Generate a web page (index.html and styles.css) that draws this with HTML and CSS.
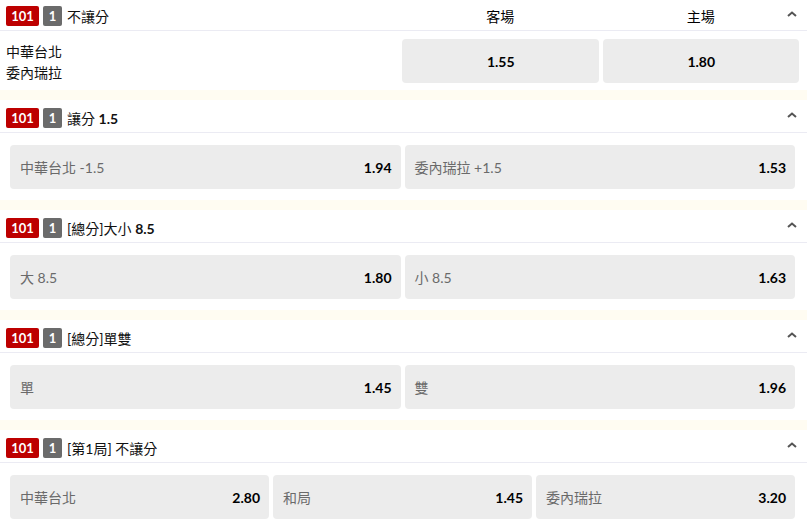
FILE: index.html
```html
<!DOCTYPE html>
<html>
<head>
  <meta charset="utf-8">
  <title>Markets</title>
  <link rel="stylesheet" href="styles.css">
</head>
<body>
  <div class="markets">

    <section class="market">
      <div class="market-head head-cols">
        <div class="head-title">
          <span class="badge badge-red">101</span>
          <span class="badge badge-grey">1</span>
          <span class="title">不讓分</span>
        </div>
        <div class="col-label">客場</div>
        <div class="col-label">主場</div>
        <svg class="chevron" width="10" height="6" viewBox="0 0 10 6"><polyline points="1,5 5,1.5 9,5" fill="none" stroke="#555" stroke-width="2"/></svg>
      </div>
      <div class="market-body body-cols">
        <div class="teams">
          <div>中華台北</div>
          <div>委內瑞拉</div>
        </div>
        <div class="odd odd-center"><b>1.55</b></div>
        <div class="odd odd-center"><b>1.80</b></div>
      </div>
    </section>

    <div class="strip"></div>

    <section class="market">
      <div class="market-head">
        <div class="head-title">
          <span class="badge badge-red">101</span>
          <span class="badge badge-grey">1</span>
          <span class="title">讓分 <b>1.5</b></span>
        </div>
        <svg class="chevron" width="10" height="6" viewBox="0 0 10 6"><polyline points="1,5 5,1.5 9,5" fill="none" stroke="#555" stroke-width="2"/></svg>
      </div>
      <div class="market-body grid-2">
        <div class="odd"><span class="label">中華台北 -1.5</span><b>1.94</b></div>
        <div class="odd"><span class="label">委內瑞拉 +1.5</span><b>1.53</b></div>
      </div>
    </section>

    <div class="strip"></div>

    <section class="market">
      <div class="market-head">
        <div class="head-title">
          <span class="badge badge-red">101</span>
          <span class="badge badge-grey">1</span>
          <span class="title">[總分]大小 <b>8.5</b></span>
        </div>
        <svg class="chevron" width="10" height="6" viewBox="0 0 10 6"><polyline points="1,5 5,1.5 9,5" fill="none" stroke="#555" stroke-width="2"/></svg>
      </div>
      <div class="market-body grid-2">
        <div class="odd"><span class="label">大 8.5</span><b>1.80</b></div>
        <div class="odd"><span class="label">小 8.5</span><b>1.63</b></div>
      </div>
    </section>

    <div class="strip"></div>

    <section class="market">
      <div class="market-head">
        <div class="head-title">
          <span class="badge badge-red">101</span>
          <span class="badge badge-grey">1</span>
          <span class="title">[總分]單雙</span>
        </div>
        <svg class="chevron" width="10" height="6" viewBox="0 0 10 6"><polyline points="1,5 5,1.5 9,5" fill="none" stroke="#555" stroke-width="2"/></svg>
      </div>
      <div class="market-body grid-2">
        <div class="odd"><span class="label">單</span><b>1.45</b></div>
        <div class="odd"><span class="label">雙</span><b>1.96</b></div>
      </div>
    </section>

    <div class="strip"></div>

    <section class="market">
      <div class="market-head">
        <div class="head-title">
          <span class="badge badge-red">101</span>
          <span class="badge badge-grey">1</span>
          <span class="title">[第1局] 不讓分</span>
        </div>
        <svg class="chevron" width="10" height="6" viewBox="0 0 10 6"><polyline points="1,5 5,1.5 9,5" fill="none" stroke="#555" stroke-width="2"/></svg>
      </div>
      <div class="market-body grid-3">
        <div class="odd"><span class="label">中華台北</span><b>2.80</b></div>
        <div class="odd"><span class="label">和局</span><b>1.45</b></div>
        <div class="odd"><span class="label">委內瑞拉</span><b>3.20</b></div>
      </div>
    </section>

  </div>
</body>
</html>
```

FILE: styles.css
```css
* {
  box-sizing: border-box;
  margin: 0;
  padding: 0;
}
body {
  font-family: Lato, "Noto Sans CJK TC", sans-serif;
  font-size: 14px;
  color: #111;
  background-color: #fff;
}
.market {
  background-color: #fff;
}
.market-head {
  position: relative;
  height: 33px;
  display: flex;
  align-items: center;
  padding: 3px 8px 0 6px;
  border-bottom: 1px solid #ebebf3;
}
.head-cols {
  height: 31px;
  padding-top: 1px;
  display: grid;
  grid-template-columns: 392px 1fr 1fr;
  column-gap: 4px;
}
.head-title {
  display: flex;
  align-items: center;
}
.badge {
  display: inline-flex;
  align-items: center;
  justify-content: center;
  height: 20px;
  border-radius: 2px;
  color: #fff;
  font-weight: bold;
  font-size: 13px;
  margin-right: 4px;
}
.badge-red {
  width: 33px;
  background-color: #bd0000;
}
.badge-grey {
  width: 19px;
  background-color: #6b6b6b;
  margin-right: 5px;
}
.title {
  color: #111;
}
.col-label {
  text-align: center;
  color: #000;
}
.chevron {
  position: absolute;
  right: 10px;
  top: 50%;
  margin-top: -4px;
}
.market-body {
  padding: 12px 12px 11px 10px;
  display: grid;
  column-gap: 4px;
}
.body-cols {
  grid-template-columns: 392px 1fr 1fr;
  padding: 8px 8px 7px 6px;
}
.grid-2 {
  grid-template-columns: 1fr 1fr;
}
.grid-3 {
  grid-template-columns: 1fr 1fr 1fr;
}
.teams {
  display: flex;
  flex-direction: column;
  justify-content: center;
  padding-top: 2px;
  line-height: 21px;
  color: #111;
}
.odd {
  height: 44px;
  display: flex;
  align-items: center;
  justify-content: space-between;
  padding: 0 9px 0 10px;
  background-color: #ececec;
  border-radius: 4px;
}
.odd-center {
  justify-content: center;
}
.label {
  color: #6a6a6a;
}
.odd b {
  color: #000;
}
.strip {
  height: 10px;
  background-color: #fffcf2;
}
```
